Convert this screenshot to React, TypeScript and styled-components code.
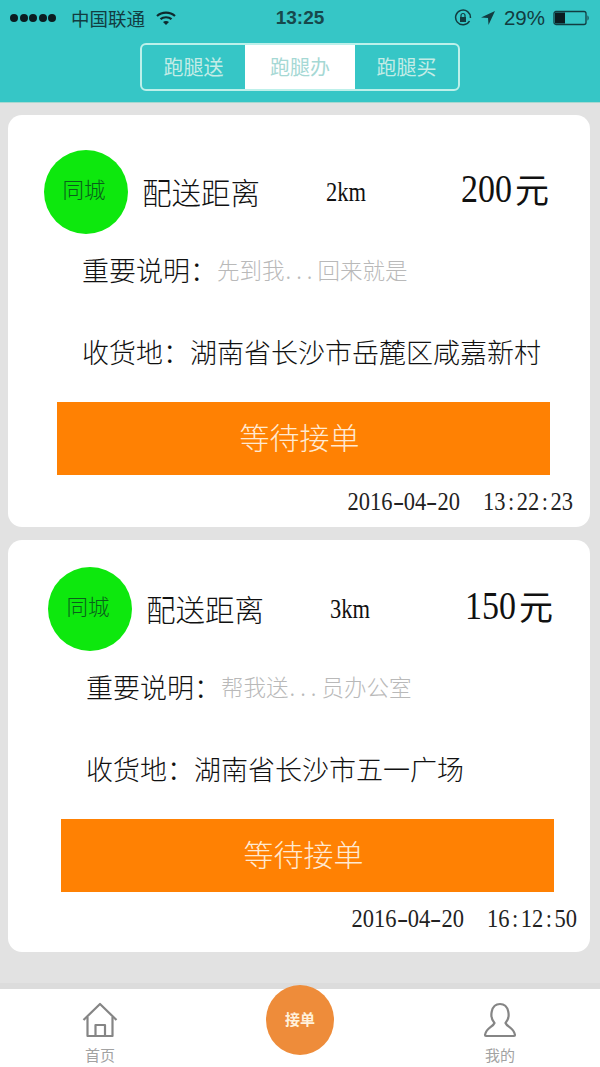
/* IMPORTS */
import React from 'react';
import styled, { createGlobalStyle } from 'styled-components';

/* STYLES */
const GlobalStyle = createGlobalStyle`
  html, body {
    margin: 0;
    padding: 0;
    background: #e2e2e2;
  }
  * {
    box-sizing: border-box;
  }
`;

const Page = styled.div`
  width: 600px;
  height: 1067px;
  display: flex;
  flex-direction: column;
  overflow: hidden;
  background: #e2e2e2;
  color: #111111;
  font-family: "Liberation Sans", "Noto Sans CJK SC", sans-serif;
`;

const Header = styled.header`
  height: 103px;
  flex: none;
  background: #36c6c6;
  border-bottom: 1px solid #a9d8d0;
`;

const StatusBar = styled.div`
  height: 36px;
  padding: 0 10px;
  display: grid;
  grid-template-columns: 1fr auto 1fr;
  align-items: center;
  color: #123c40;
`;

const StatusLeft = styled.div`
  display: flex;
  align-items: center;
  gap: 10px;
  font-size: 18.5px;
`;

const StatusRight = styled.div`
  display: flex;
  align-items: center;
  justify-content: flex-end;
  gap: 8px;
  font-size: 20.5px;
`;

const Clock = styled.div`
  font-size: 19px;
  font-weight: 700;
  color: #17484c;
`;

const Dots = styled.div`
  display: flex;
  gap: 1.5px;
  margin-right: 5px;
`;

const Dot = styled.span`
  width: 8px;
  height: 8px;
  border-radius: 50%;
  background: #0b1c20;
`;

const TabsRow = styled.div`
  display: flex;
  justify-content: center;
  padding-top: 7px;
`;

const Tabs = styled.div`
  width: 320px;
  height: 48px;
  display: grid;
  grid-template-columns: 103px 110px 103px;
  border: 2px solid #bdf0ea;
  border-radius: 6px;
  overflow: hidden;
`;

const Tab = styled.div<{ $active?: boolean }>`
  display: flex;
  align-items: center;
  justify-content: center;
  padding-bottom: 2px;
  font-size: 20px;
  background: ${(props) => (props.$active ? '#ffffff' : 'transparent')};
  color: ${(props) => (props.$active ? '#a5d8d4' : '#c4ece6')};
`;

const List = styled.main`
  flex: 1;
  padding: 12px 10px 0 8px;
  display: flex;
  flex-direction: column;
  gap: 13px;
`;

const Card = styled.section<{ $shift: number; $top: number }>`
  height: 412px;
  padding: ${(props) => props.$top}px 0 0 ${(props) => props.$shift}px;
  background: #ffffff;
  border-radius: 14px;
`;

const TopRow = styled.div`
  height: 84px;
  display: flex;
  align-items: center;
`;

const Badge = styled.div`
  width: 84px;
  height: 84px;
  flex: none;
  margin-right: 14px;
  padding: 0 4px 8px 0;
  display: flex;
  align-items: center;
  justify-content: center;
  border-radius: 50%;
  background: #0de80d;
  color: #0a5e1c;
  font-size: 21.5px;
  font-weight: 300;
`;

const Title = styled.div`
  width: 184px;
  padding-bottom: 3px;
  font-size: 29.5px;
  font-weight: 300;
`;

const Distance = styled.div`
  width: 135px;
  font-family: "Liberation Serif", "Noto Sans CJK SC", serif;
  font-size: 22.5px;
  span {
    display: inline-block;
    transform: scaleY(1.25);
  }
`;

const Price = styled.div`
  display: flex;
  align-items: baseline;
  gap: 3px;
  padding-bottom: 8px;
  font-family: "Liberation Serif", "Noto Sans CJK SC", serif;
  font-size: 34px;
  color: #111111;
  white-space: nowrap;
`;

const PriceDigits = styled.span`
  display: inline-block;
  transform: scaleY(1.15);
  transform-origin: bottom;
`;

const InfoRow = styled.div<{ $gap: number }>`
  height: 40px;
  margin-top: ${(props) => props.$gap}px;
  padding-left: 38px;
  display: flex;
  align-items: center;
  white-space: nowrap;
  font-size: 27px;
  font-weight: 300;
  font-family: "Noto Sans CJK SC", sans-serif;
`;

const Hint = styled.span`
  font-size: 22.5px;
  color: #b9b9b9;
`;

const HintDots = styled.span`
  letter-spacing: 5px;
  margin-left: 1px;
`;

const WaitButton = styled.div`
  width: 493px;
  height: 73px;
  margin: 31px 0 0 13px;
  padding: 0 8px 6px 0;
  display: flex;
  align-items: center;
  justify-content: center;
  background: #ff8103;
  color: #ffe9d2;
  font-size: 30px;
  font-weight: 300;
`;

const Stamp = styled.div`
  width: 529px;
  margin-top: 14px;
  display: flex;
  justify-content: flex-end;
  gap: 23px;
  font-family: "Liberation Serif", serif;
  font-size: 22.5px;
  line-height: 26px;
  color: #222222;
`;

const Cell = styled.span<{ $wide: boolean }>`
  display: inline-block;
  width: 11.25px;
  text-align: center;
  transform: scale(${(props) => (props.$wide ? 1.5 : 1)}, 1.1);
`;

const BottomBar = styled.nav`
  height: 78px;
  flex: none;
  display: grid;
  grid-template-columns: 200px 200px 200px;
  background: #ffffff;
  box-shadow: 0 -6px 0 #dcdcdc;
`;

const BarItem = styled.div`
  display: flex;
  flex-direction: column;
  align-items: center;
  padding-top: 13px;
  color: #a2a2a2;
  font-size: 15px;
  gap: 6px;
`;

const TakeOrder = styled.div`
  width: 68px;
  height: 70px;
  margin: -4px auto 0;
  padding-bottom: 3px;
  display: flex;
  align-items: center;
  justify-content: center;
  border-radius: 50%;
  background: #ee8c3a;
  color: #fff1dc;
  font-size: 15px;
  font-weight: 700;
`;

/* DATA */
const orders = [
  {
    shift: 36, top: 35, km: '2km', price: '200', hintStart: '先到我', hintEnd: '回来就是', place: '湖南省长沙市岳麓区咸嘉新村',
    date: '2016-04-20', time: '13:22:23',
  },
  {
    shift: 40, top: 27, km: '3km', price: '150', hintStart: '帮我送', hintEnd: '员办公室', place: '湖南省长沙市五一广场',
    date: '2016-04-20', time: '16:12:50',
  },
];

/* ICONS */
const Wifi = () => (
  <svg width="22" height="16" viewBox="0 0 22 16" fill="none" stroke="#0f2a2e" strokeWidth="2.2">
    <path d="M2 6 C7 1.5 15 1.5 20 6" />
    <path d="M5.5 9.2 C8.5 6.6 13.5 6.6 16.5 9.2" />
    <path d="M11 15 L8 12 C9.8 10.8 12.2 10.8 14 12 Z" fill="#0f2a2e" stroke="none" />
  </svg>
);

const RotationLock = () => (
  <svg width="18" height="18" viewBox="0 0 18 18" fill="none" stroke="#123c40" strokeWidth="1.5">
    <path d="M15.5 12 A7.4 7.4 0 1 1 16.4 9" />
    <rect x="6" y="8" width="6" height="5" fill="#123c40" stroke="none" />
    <path d="M7 8 V6.5 A2 2 0 0 1 11 6.5 V8" strokeWidth="1.2" />
  </svg>
);

const LocationArrow = () => (
  <svg width="16" height="16" viewBox="0 0 16 16" fill="#123c40">
    <path d="M15 1 L1 7.5 L8 8 L8.5 15 Z" />
  </svg>
);

const Battery = () => (
  <svg width="37" height="16" viewBox="0 0 37 16" fill="none">
    <rect x="1" y="1.5" width="32" height="13" rx="2" stroke="#123c40" strokeWidth="1.3" />
    <rect x="2" y="2.5" width="10" height="11" fill="#0b1c20" />
    <path d="M34.5 5.5 C36 6 36 10 34.5 10.5 Z" fill="#123c40" />
  </svg>
);

const HomeIcon = () => (
  <svg width="36" height="36" viewBox="0 0 36 36" fill="none" stroke="#858585" strokeWidth="2.2" strokeLinejoin="round">
    <path d="M1.5 18 L18 2 L34.5 18" />
    <path d="M5.5 15 V34 H30.5 V15" />
    <path d="M13.5 34 V23 H23 V34" />
  </svg>
);

const UserIcon = () => (
  <svg width="36" height="36" viewBox="0 0 36 36" fill="none" stroke="#858585" strokeWidth="2.2" strokeLinejoin="round">
    <path d="M12.5 21 C7 15 9 2 18 2 C27 2 29 15 23.5 21 C25 25 32 26 33 33 Q33 34 32 34 H4 Q3 34 3 33 C4 26 11 25 12.5 21 Z" />
  </svg>
);

/* HELPERS */
// The date and time are set in a fixed pitch, one cell for each character.
const FixedPitch = ({ text }: { text: string }) => (
  <span>
    {text.split('').map((char, index) => (
      <Cell key={index} $wide={char === '-'}>{char}</Cell>
    ))}
  </span>
);

/* COMPONENT */
function App() {
  return (
    <Page>
      <GlobalStyle />
      <Header>
        <StatusBar>
          <StatusLeft>
            <Dots>{[0, 1, 2, 3, 4].map((i) => <Dot key={i} />)}</Dots>
            <span>中国联通</span>
            <Wifi />
          </StatusLeft>
          <Clock>13:25</Clock>
          <StatusRight>
            <RotationLock />
            <LocationArrow />
            <span>29%</span>
            <Battery />
          </StatusRight>
        </StatusBar>
        <TabsRow>
          <Tabs>
            <Tab>跑腿送</Tab>
            <Tab $active>跑腿办</Tab>
            <Tab>跑腿买</Tab>
          </Tabs>
        </TabsRow>
      </Header>
      <List>
        {orders.map((order) => (
          <Card key={order.time} $shift={order.shift} $top={order.top}>
            <TopRow>
              <Badge>同城</Badge>
              <Title>配送距离</Title>
              <Distance><span>{order.km}</span></Distance>
              <Price><PriceDigits>{order.price}</PriceDigits>元</Price>
            </TopRow>
            <InfoRow $gap={15}>
              重要说明：
              <Hint>{order.hintStart}<HintDots>...</HintDots>{order.hintEnd}</Hint>
            </InfoRow>
            <InfoRow $gap={42}>收货地：{order.place}</InfoRow>
            <WaitButton>等待接单</WaitButton>
            <Stamp>
              <FixedPitch text={order.date} />
              <FixedPitch text={order.time} />
            </Stamp>
          </Card>
        ))}
      </List>
      <BottomBar>
        <BarItem>
          <HomeIcon />
          <span>首页</span>
        </BarItem>
        <TakeOrder>接单</TakeOrder>
        <BarItem>
          <UserIcon />
          <span>我的</span>
        </BarItem>
      </BottomBar>
    </Page>
  );
}

export default App;
